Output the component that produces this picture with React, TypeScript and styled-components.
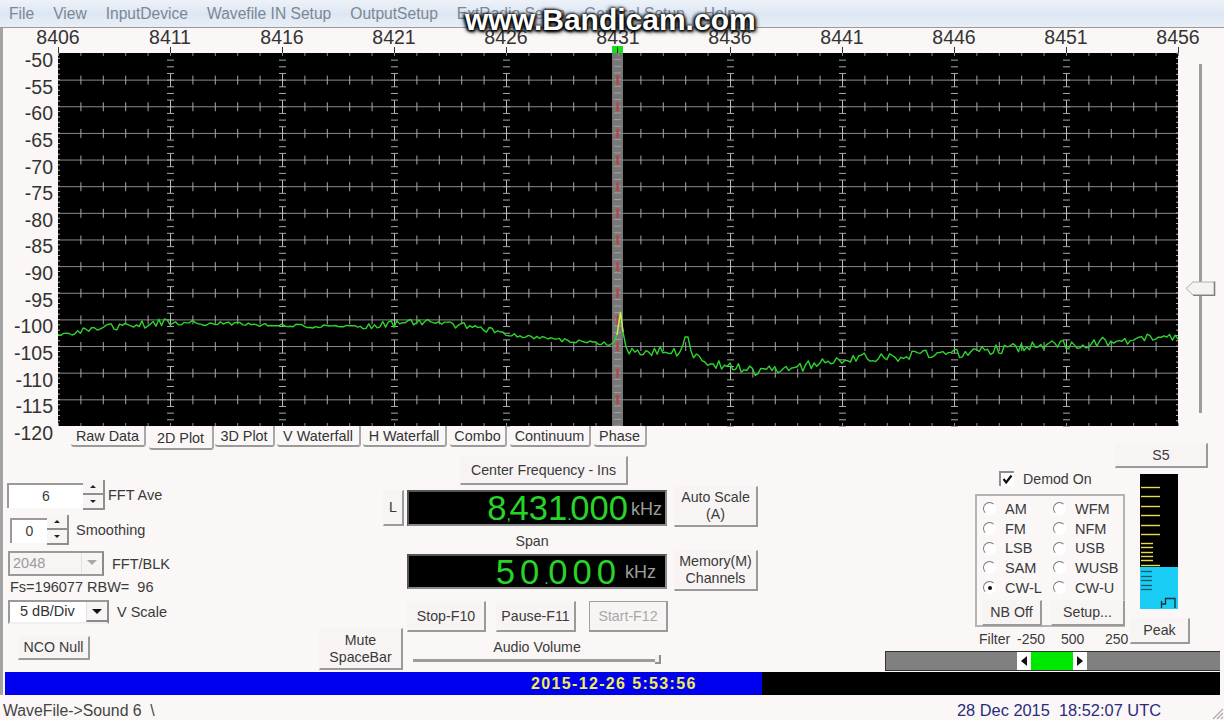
import React from "react";
import styled, { createGlobalStyle } from "styled-components";

const GlobalStyle = createGlobalStyle`
  html, body { margin: 0; padding: 0; background: #fbf7f7; }
  body { font-family: "Liberation Sans", Arial, sans-serif; color: #3a3a3a; }
`;

const Window = styled.div`
  position: relative;
  width: 1224px;
  height: 720px;
  overflow: hidden;
  display: flex;
  flex-direction: column;
  background: #fbf7f7;
`;

const MenuBar = styled.div`
  height: 27px;
  flex: none;
  display: flex;
  align-items: center;
  gap: 19px;
  padding-left: 9px;
  background: linear-gradient(#eef2f8, #dde7f4 50%, #e7eef7);
  border-bottom: 1px solid #9a9a9a;
  font-size: 15.6px;
  color: #7d8793;
`;

const Watermark = styled.div`
  position: absolute;
  left: 465px;
  top: 4px;
  font-size: 30px;
  line-height: 32px;
  font-weight: 700;
  color: #fff;
  text-shadow: 0 0 3px #000, 1px 1px 3px #000, -1px 1px 3px #000, 2px 2px 4px #222, -2px 0 4px #222;
  white-space: nowrap;
`;

const Client = styled.div`
  flex: none;
  width: 1217px;
  height: 667px;
  border-left: 3px solid #a3a3a3;
  display: flex;
  flex-direction: column;
`;

const Ruler = styled.div`
  height: 25px;
  flex: none;
  display: flex;
  margin-left: -1px;
`;

const RulerLabel = styled.div`
  flex: none;
  width: 112px;
  text-align: center;
  font-size: 19.5px;
  line-height: 19px;
  padding-top: 0;
  color: #333;
`;

const MainGrid = styled.div`
  flex: none;
  display: grid;
  grid-template-columns: 55px 1120px 1fr;
  grid-template-rows: 373px 24px;
`;

const Scale = styled.div`
  grid-row: 1 / span 2;
  grid-column: 1;
  display: flex;
  flex-direction: column;
  margin-top: -6px;
  height: 403px;
  padding-right: 5px;
`;

const ScaleLabel = styled.div`
  flex: none;
  height: 26.64px;
  line-height: 26px;
  text-align: right;
  font-size: 19.5px;
  color: #333;
`;

const PlotSvg = styled.svg`
  grid-row: 1;
  grid-column: 2;
  display: block;
  overflow: visible;
  background: #000;
`;

const SliderBox = styled.div`
  grid-row: 1;
  grid-column: 3;
  position: relative;
`;

const SliderTrack = styled.div`
  position: absolute;
  left: 21px;
  top: 11px;
  width: 3px;
  height: 349px;
  background: #9c9c9c;
`;

const SliderThumb = styled.svg`
  position: absolute;
  left: 7px;
  top: 228px;
`;

const Tabs = styled.div`
  grid-row: 2;
  grid-column: 2;
  display: flex;
  align-items: flex-start;
  padding-left: 13px;
`;

const Tab = styled.div<{ $w: number; $ml?: number; $active?: boolean }>`
  flex: none;
  box-sizing: border-box;
  width: ${(p) => p.$w}px;
  margin-left: ${(p) => p.$ml ?? 0}px;
  height: ${(p) => (p.$active ? 24 : 21)}px;
  padding-top: ${(p) => (p.$active ? 3 : 1)}px;
  text-align: center;
  font-size: 14.4px;
  line-height: 18px;
  color: #333;
  background: #fbf7f7;
  border-right: 2px solid #a8a8a8;
  border-bottom: 2px solid #9a9a9a;
  border-radius: 0 0 3px 3px;
`;

const Lower = styled.div`
  flex: none;
  height: 222px;
  display: flex;
`;

const LeftCol = styled.div`
  flex: none;
  width: 316px;
  padding-top: 30px;
  display: flex;
  flex-direction: column;
  align-items: flex-start;
`;

const ControlRow = styled.div<{ $mt: number; $ml: number }>`
  display: flex;
  align-items: center;
  margin-top: ${(p) => p.$mt}px;
  margin-left: ${(p) => p.$ml}px;
  font-size: 14.5px;
  color: #3a3a3a;
  white-space: pre;
`;

const Field = styled.div<{ $w: number; $h: number }>`
  box-sizing: border-box;
  width: ${(p) => p.$w}px;
  height: ${(p) => p.$h}px;
  background: #fff;
  border-top: 2px solid #9a9a9a;
  border-left: 2px solid #9a9a9a;
  text-align: center;
  line-height: ${(p) => p.$h - 3}px;
  font-size: 14px;
`;

const SpinPair = styled.div<{ $mr: number }>`
  display: flex;
  flex-direction: column;
  margin-right: ${(p) => p.$mr}px;
`;

const SpinButton = styled.div`
  box-sizing: border-box;
  width: 22px;
  height: 15px;
  display: flex;
  align-items: center;
  justify-content: center;
  background: #f8f4f4;
  border-right: 2px solid #8f8f8f;
  border-bottom: 2px solid #8f8f8f;
`;

const SpinArrow = styled.div<{ $up?: boolean }>`
  width: 0;
  height: 0;
  border-left: 3px solid transparent;
  border-right: 3px solid transparent;
  ${(p) => (p.$up ? "border-bottom: 3px solid #222;" : "border-top: 3px solid #222;")}
`;

const Combo = styled.div<{ $w: number; $h: number; $disabled?: boolean }>`
  box-sizing: border-box;
  width: ${(p) => p.$w}px;
  height: ${(p) => p.$h}px;
  display: flex;
  background: ${(p) => (p.$disabled ? "#f8f4f4" : "#fff")};
  border: 2px solid #9a9a9a;
  border-right-color: #8a8a8a;
  border-bottom-color: ${(p) => (p.$disabled ? "#9a9a9a" : "#f0f0f0")};
  color: ${(p) => (p.$disabled ? "#9a9a9a" : "#333")};
  line-height: ${(p) => p.$h - 5}px;
  margin-right: 8px;
`;

const ComboText = styled.div<{ $center?: boolean }>`
  flex: 1;
  padding-left: ${(p) => (p.$center ? 10 : 3)}px;
`;

const ComboArrow = styled.div<{ $disabled?: boolean }>`
  flex: none;
  width: 20px;
  display: flex;
  align-items: center;
  justify-content: center;
  background: #f8f4f4;
  border-left: 1px solid #e4e0e0;
  border-bottom: 2px solid ${(p) => (p.$disabled ? "transparent" : "#8a8a8a")};
  &::after {
    content: "";
    border-left: 5px solid transparent;
    border-right: 5px solid transparent;
    border-top: 5px solid ${(p) => (p.$disabled ? "#a8a8a8" : "#111")};
  }
`;

const Button = styled.div<{ $w: number; $h: number; $mt?: number; $ml?: number; $disabled?: boolean }>`
  flex: none;
  box-sizing: border-box;
  width: ${(p) => p.$w}px;
  height: ${(p) => p.$h}px;
  margin-top: ${(p) => p.$mt ?? 0}px;
  margin-left: ${(p) => p.$ml ?? 0}px;
  display: flex;
  align-items: center;
  justify-content: center;
  text-align: center;
  font-size: 14.2px;
  line-height: 17px;
  color: ${(p) => (p.$disabled ? "#a8a8a8" : "#3a3a3a")};
  background: #f8f4f4;
  border: 1px solid ${(p) => (p.$disabled ? "#a0a0a0" : "#f8f4f4")};
  border-right: 2px solid #9a9a9a;
  border-bottom: 2px solid #9a9a9a;
  white-space: pre-line;
`;

const MuteCol = styled.div`
  flex: none;
  width: 88px;
  display: flex;
  flex-direction: column;
  justify-content: space-between;
  padding: 40px 0 2px;
  box-sizing: border-box;
`;

const CenterCol = styled.div`
  flex: none;
  width: 267px;
  display: flex;
  flex-direction: column;
`;

const Display = styled.div<{ $mt: number; $h: number; $pr: number }>`
  box-sizing: border-box;
  width: 260px;
  height: ${(p) => p.$h}px;
  margin-top: ${(p) => p.$mt}px;
  background: #000;
  border: 2px solid #8a8a8a;
  border-top-color: #555;
  border-left-color: #555;
  display: flex;
  align-items: center;
  justify-content: flex-end;
  padding-right: ${(p) => p.$pr}px;
  white-space: nowrap;
`;

const Digits = styled.div<{ $spacing?: number; $mr: number }>`
  font-size: 34.6px;
  line-height: 34px;
  color: #28d428;
  letter-spacing: ${(p) => p.$spacing ?? 0}px;
  margin-right: ${(p) => p.$mr}px;
`;

const Sep = styled.span<{ $w: number }>`
  display: inline-block;
  width: ${(p) => p.$w}px;
  font-size: 16px;
  line-height: 16px;
  letter-spacing: 0;
`;

const Unit = styled.div`
  font-size: 18px;
  color: #9c9c9c;
  padding-top: 2px;
`;

const Caption = styled.div<{ $mt: number; $w: number }>`
  width: ${(p) => p.$w}px;
  margin-top: ${(p) => p.$mt}px;
  text-align: center;
  font-size: 14.2px;
  line-height: 16px;
  color: #3a3a3a;
`;

const TransportRow = styled.div`
  display: flex;
  margin-top: 12px;
`;

const VolumeTrack = styled.div`
  position: relative;
  width: 248px;
  height: 3px;
  margin: 4px 0 0 6px;
  background: #9c9c9c;
  &::after {
    content: "";
    position: absolute;
    right: 0;
    top: -4px;
    width: 4px;
    height: 7px;
    background: #f4f0f0;
    border-right: 2px solid #8f8f8f;
    border-bottom: 2px solid #8f8f8f;
  }
`;

const SideButtons = styled.div`
  flex: none;
  width: 84px;
  display: flex;
  flex-direction: column;
  padding-top: 36px;
`;

const RightBlock = styled.div`
  flex: none;
  width: 335px;
  margin-left: 127px;
  display: flex;
  flex-direction: column;
`;

const RightTop = styled.div`
  flex: none;
  height: 201px;
  display: flex;
  padding-left: 90px;
`;

const ModeCol = styled.div`
  flex: none;
  width: 150px;
  display: flex;
  flex-direction: column;
`;

const DemodRow = styled.div`
  display: flex;
  align-items: center;
  gap: 9px;
  height: 15px;
  margin: 21px 0 0 24px;
  font-size: 14.2px;
`;

const CheckBox = styled.svg`
  flex: none;
  background: #fff;
  border-top: 2px solid #8f8f8f;
  border-left: 2px solid #8f8f8f;
`;

const ModeBox = styled.div`
  box-sizing: border-box;
  height: 133px;
  margin-top: 8px;
  border: 2px solid #b4b4b4;
  padding: 3px 0 0 6px;
  display: flex;
  flex-direction: column;
`;

const RadioGrid = styled.div`
  display: grid;
  grid-template-columns: 70px 70px;
  grid-auto-rows: 19.7px;
`;

const RadioItem = styled.div`
  display: flex;
  align-items: center;
  gap: 9px;
  font-size: 14.5px;
  color: #3a3a3a;
  white-space: nowrap;
`;

const Radio = styled.div<{ $on?: boolean }>`
  flex: none;
  box-sizing: border-box;
  width: 13px;
  height: 13px;
  border-radius: 50%;
  background: #fff;
  border: 1.5px solid #fff;
  border-top-color: #777;
  border-left-color: #777;
  display: flex;
  align-items: center;
  justify-content: center;
  &::after {
    content: "";
    display: ${(p) => (p.$on ? "block" : "none")};
    width: 4px;
    height: 4px;
    border-radius: 50%;
    background: #111;
  }
`;

const ModeButtons = styled.div`
  display: flex;
  margin-top: 3px;
`;

const FilterLabels = styled.div`
  display: flex;
  margin: 4px 0 0 4px;
  font-size: 14px;
  line-height: 16px;
  width: 160px;
  white-space: pre;
`;

const FilterLabel = styled.div<{ $w: number }>`
  flex: none;
  width: ${(p) => p.$w}px;
`;

const MeterCol = styled.div`
  flex: none;
  margin-left: -10px;
  display: flex;
  flex-direction: column;
`;

const MeterSvg = styled.svg`
  display: block;
  margin: 6px 0 0 25px;
  background: #000;
`;

const FilterBar = styled.div`
  box-sizing: border-box;
  height: 20px;
  background: #808080;
  border: 1px solid #333;
  border-right: none;
  display: flex;
  padding-left: 131px;
`;

const FilterGrip = styled.div<{ $left?: boolean }>`
  flex: none;
  width: 14px;
  background: #fff;
  display: flex;
  align-items: center;
  justify-content: center;
  &::after {
    content: "";
    border-top: 5px solid transparent;
    border-bottom: 5px solid transparent;
    ${(p) => (p.$left ? "border-right: 6px solid #111;" : "border-left: 6px solid #111;")}
  }
`;

const FilterPass = styled.div`
  flex: none;
  width: 42px;
  background: #00e800;
`;

const ProgressBar = styled.div`
  flex: none;
  height: 23px;
  margin-left: 2px;
  display: flex;
  background: #000;
`;

const ProgressFill = styled.div`
  flex: none;
  box-sizing: border-box;
  width: 757px;
  background: #0000f0;
  padding-left: 526px;
  font-size: 16px;
  font-weight: 700;
  line-height: 24px;
  letter-spacing: 1.35px;
  color: #f2ee50;
  white-space: nowrap;
`;

const StatusBar = styled.div`
  flex: none;
  height: 25px;
  display: flex;
  justify-content: space-between;
  align-items: center;
  padding: 6px 63px 0 3px;
  box-sizing: border-box;
  font-size: 15.8px;
  white-space: pre;
`;

const StatusLeft = styled.div`
  color: #444;
`;

const StatusRight = styled.div`
  color: #2b2b7e;
  font-size: 16.4px;
`;

const Grip = styled.svg`
  position: absolute;
  right: 0;
  bottom: 0;
`;

const freqs = [8406, 8411, 8416, 8421, 8426, 8431, 8436, 8441, 8446, 8451, 8456];
const dbs = Array.from({ length: 15 }, (_, i) => -50 - i * 5);
const menus = ["File", "View", "InputDevice", "Wavefile IN Setup", "OutputSetup", "ExtRadio Setup", "General Setup", "Help"];

const PW = 1120;
const PH = 373;
const LINE = 26.64;

const anchors: [number, number][] = [
  [58, 333], [110, 328], [170, 322], [300, 326], [350, 327], [420, 322], [480, 327], [510, 335],
  [560, 340], [612, 344], [626, 350], [680, 352], [710, 364], [760, 372], [800, 367], [860, 358],
  [950, 354], [1030, 346], [1100, 342], [1178, 337],
];

function baseAt(x: number): number {
  for (let i = 1; i < anchors.length; i++) {
    if (x <= anchors[i][0]) {
      const [x0, y0] = anchors[i - 1];
      const [x1, y1] = anchors[i];
      return y0 + ((y1 - y0) * (x - x0)) / (x1 - x0);
    }
  }
  return 337;
}

function ampAt(x: number): number {
  if (x < 170) return 4;
  if (x < 210) return 3;
  if (x < 360) return 1.8;
  if (x < 500) return 3.4;
  if (x < 612) return 1.8;
  return 5;
}

function makeTrace(): string {
  let seed = 987654;
  const rnd = () => {
    seed = (seed * 16807) % 2147483647;
    return seed / 2147483647;
  };
  const pts: string[] = [];
  for (let x = 58; x <= 1178; x += 2.8) {
    const y = baseAt(x) + (rnd() - 0.5) * 2 * ampAt(x);
    if (x >= 612 && x <= 628) continue;
    if (x >= 681 && x <= 692) continue;
    pts.push(`${(x - 58).toFixed(1)},${(y - 53).toFixed(1)}`);
    if (x + 2.8 > 612 && x < 612) {
      pts.push(`${614 - 58},${342 - 53}`, `${617 - 58},${335 - 53}`, `${620.5 - 58},${312 - 53}`, `${623 - 58},${332 - 53}`, `${626 - 58},${347 - 53}`);
    }
    if (x + 2.8 > 681 && x < 681) {
      pts.push(`${683 - 58},${345 - 53}`, `${685 - 58},${337 - 53}`, `${688 - 58},${337 - 53}`, `${691 - 58},${351 - 53}`);
    }
  }
  return pts.join(" ");
}

const tracePoints = makeTrace();

function Plot() {
  const lines = Array.from({ length: 13 }, (_, i) => LINE * (i + 1));
  const minor = Array.from({ length: 51 }, (_, i) => i * 22.4);
  const major = Array.from({ length: 11 }, (_, i) => i * 112);
  const dashes = Array.from({ length: 56 }, (_, i) => i * (LINE / 4) + 6.66).filter((y) => y < PH);
  const edge = Array.from({ length: 70 }, (_, i) => i * 5.33);
  return (
    <PlotSvg width={PW} height={PH} viewBox={`0 0 ${PW} ${PH}`}>
      <rect x={554} y={0} width={11} height={PH} fill="#777" />
      {dashes.map((y) => (
        <line key={`c${y}`} x1={556} x2={563} y1={y} y2={y} stroke="#a2a2a2" />
      ))}
      {lines.map((y) => (
        <line key={`h${y}`} x1={0} x2={PW} y1={y + 0.5} y2={y + 0.5} stroke="#8a8a8a" />
      ))}
      {lines.map((y) =>
        minor.map((x, i) =>
          i % 5 === 0 ? null : (
            <line key={`t${i}-${y}`} x1={x + 0.5} x2={x + 0.5} y1={y - 4} y2={y + 5} stroke="#a8a8a8" />
          ),
        ),
      )}
      {minor.map((x, i) => (
        <line key={`e${i}`} x1={x + 0.5} x2={x + 0.5} y1={0} y2={3} stroke="#8a8a8a" />
      ))}
      {minor.map((x, i) => (
        <line key={`b${i}`} x1={x + 0.5} x2={x + 0.5} y1={PH - 3} y2={PH} stroke="#8a8a8a" />
      ))}
      {major.slice(1, 10).map((x) =>
        x === 560 ? null : (
          <g key={`m${x}`}>
            {dashes.map((y) => (
              <line key={y} x1={x - 3} x2={x + 4} y1={y + 0.5} y2={y + 0.5} stroke="#a8a8a8" />
            ))}
            {lines.map((y) => (
              <line key={y} x1={x + 0.5} x2={x + 0.5} y1={y - 6} y2={y + 7} stroke="#b8b8b8" />
            ))}
          </g>
        ),
      )}
      {edge.map((y) => (
        <g key={`s${y}`}>
          <line x1={0} x2={2} y1={y} y2={y} stroke="#b0b0b0" />
          <line x1={PW - 2} x2={PW} y1={y} y2={y} stroke="#b0b0b0" />
        </g>
      ))}
      {lines.map((y) => (
        <line key={`r${y}`} x1={559.5} x2={559.5} y1={y - 4} y2={y + 5} stroke="#c83a3a" strokeWidth={2} />
      ))}
      {major.map((x) => (
        <line key={`k${x}`} x1={x + 0.5} x2={x + 0.5} y1={-6} y2={0} stroke="#333" />
      ))}
      <rect x={554} y={-7} width={11} height={7} fill="#18e018" />
      <line x1={559.5} x2={559.5} y1={-6} y2={0} stroke="#333" />
      <polyline points={tracePoints} fill="none" stroke="#2ed42e" strokeWidth={1.4} strokeLinejoin="round" />
      <polyline points="559,282 562.5,259 565,279" fill="none" stroke="#d8e85a" strokeWidth={1.4} />
    </PlotSvg>
  );
}

function Meter() {
  const yellowLong = [13, 22, 32, 41, 51, 60, 91];
  const yellowShort = [69, 73, 78, 82, 86];
  const darkShort = [97, 102, 106, 111, 115];
  return (
    <MeterSvg width={38} height={135} viewBox="0 0 38 135">
      <rect x={0} y={93} width={38} height={42} fill="#19cdf5" />
      {yellowLong.map((y) => (
        <line key={y} x1={1} x2={20} y1={y + 0.5} y2={y + 0.5} stroke="#e6de48" strokeWidth={1.4} />
      ))}
      {yellowShort.map((y) => (
        <line key={y} x1={1} x2={13} y1={y + 0.5} y2={y + 0.5} stroke="#e6de48" strokeWidth={1.4} />
      ))}
      {darkShort.map((y) => (
        <line key={y} x1={1} x2={12} y1={y + 0.5} y2={y + 0.5} stroke="#0a5a6a" strokeWidth={1.3} />
      ))}
      <path d="M21.5 134V127M21.5 130H25.5V124.5H35V134" fill="none" stroke="#133" strokeWidth={1.3} />
    </MeterSvg>
  );
}

const leftModes = ["AM", "FM", "LSB", "SAM", "CW-L"];
const rightModes = ["WFM", "NFM", "USB", "WUSB", "CW-U"];

export default function App() {
  return (
    <Window>
      <GlobalStyle />
      <MenuBar>
        {menus.map((m) => (
          <div key={m}>{m}</div>
        ))}
      </MenuBar>
      <Client>
        <Ruler>
          {freqs.map((f) => (
            <RulerLabel key={f}>{f}</RulerLabel>
          ))}
        </Ruler>
        <MainGrid>
          <Scale>
            {dbs.map((d) => (
              <ScaleLabel key={d}>{d}</ScaleLabel>
            ))}
          </Scale>
          <Plot />
          <SliderBox>
            <SliderTrack />
            <SliderThumb width={31} height={15} viewBox="0 0 31 15">
              <path d="M1 7.5 L8 1 H29.5 V14 H8 Z" fill="#f6f2f2" stroke="#b0b0b0" />
              <path d="M29.5 0.5 V14.5 H8" fill="none" stroke="#808080" strokeWidth={1.6} />
            </SliderThumb>
          </SliderBox>
          <Tabs>
            <Tab $w={75}>Raw Data</Tab>
            <Tab $w={65} $ml={3} $active>2D Plot</Tab>
            <Tab $w={60} $ml={1}>3D Plot</Tab>
            <Tab $w={84} $ml={2}>V Waterfall</Tab>
            <Tab $w={84} $ml={2}>H Waterfall</Tab>
            <Tab $w={57} $ml={3}>Combo</Tab>
            <Tab $w={81} $ml={3}>Continuum</Tab>
            <Tab $w={53} $ml={3}>Phase</Tab>
          </Tabs>
        </MainGrid>
        <Lower>
          <LeftCol>
            <ControlRow $mt={0} $ml={4}>
              <Field $w={76} $h={25}>6</Field>
              <SpinPair $mr={3}>
                <SpinButton><SpinArrow $up /></SpinButton>
                <SpinButton><SpinArrow /></SpinButton>
              </SpinPair>
              FFT Ave
            </ControlRow>
            <ControlRow $mt={5} $ml={7}>
              <Field $w={37} $h={25}>0</Field>
              <SpinPair $mr={7}>
                <SpinButton><SpinArrow $up /></SpinButton>
                <SpinButton><SpinArrow /></SpinButton>
              </SpinPair>
              Smoothing
            </ControlRow>
            <ControlRow $mt={6} $ml={5}>
              <Combo $w={96} $h={25} $disabled>
                <ComboText>2048</ComboText>
                <ComboArrow $disabled />
              </Combo>
              FFT/BLK
            </ControlRow>
            <ControlRow $mt={3} $ml={7}>Fs=196077 RBW=  96</ControlRow>
            <ControlRow $mt={5} $ml={5}>
              <Combo $w={101} $h={24}>
                <ComboText $center>5 dB/Div</ComboText>
                <ComboArrow />
              </Combo>
              V Scale
            </ControlRow>
            <Button $w={72} $h={24} $mt={12} $ml={15}>NCO Null</Button>
          </LeftCol>
          <MuteCol>
            <Button $w={21} $h={36} $ml={64}>L</Button>
            <Button $w={84} $h={42}>{"Mute\nSpaceBar"}</Button>
          </MuteCol>
          <CenterCol>
            <Button $w={168} $h={29} $mt={6} $ml={53}>Center Frequency - Ins</Button>
            <Display $mt={5} $h={36} $pr={3}>
              <Digits $mr={3}>
                8<Sep $w={3}>,</Sep>431<Sep $w={3}>.</Sep>000
              </Digits>
              <Unit>kHz</Unit>
            </Display>
            <Caption $mt={7} $w={250}>Span</Caption>
            <Display $mt={5} $h={35} $pr={9}>
              <Digits $spacing={5} $mr={4}>
                50<Sep $w={4}>.</Sep>000
              </Digits>
              <Unit>kHz</Unit>
            </Display>
            <TransportRow>
              <Button $w={79} $h={31}>Stop-F10</Button>
              <Button $w={80} $h={31} $ml={10}>Pause-F11</Button>
              <Button $w={79} $h={31} $ml={13} $disabled>Start-F12</Button>
            </TransportRow>
            <Caption $mt={7} $w={260}>Audio Volume</Caption>
            <VolumeTrack />
          </CenterCol>
          <SideButtons>
            <Button $w={84} $h={41}>{"Auto Scale\n(A)"}</Button>
            <Button $w={84} $h={41} $mt={23}>{"Memory(M)\nChannels"}</Button>
          </SideButtons>
          <RightBlock>
            <RightTop>
              <ModeCol>
                <DemodRow>
                  <CheckBox width={13} height={13} viewBox="0 0 13 13">
                    <path d="M2.5 6 L5.2 9.5 L10.5 2.5" fill="none" stroke="#111" strokeWidth={2.2} />
                  </CheckBox>
                  Demod On
                </DemodRow>
                <ModeBox>
                  <RadioGrid>
                    {leftModes.map((m, i) => (
                      <React.Fragment key={m}>
                        <RadioItem>
                          <Radio $on={m === "CW-L"} />
                          {m}
                        </RadioItem>
                        <RadioItem>
                          <Radio />
                          {rightModes[i]}
                        </RadioItem>
                      </React.Fragment>
                    ))}
                  </RadioGrid>
                  <ModeButtons>
                    <Button $w={60} $h={26} $ml={-1}>NB Off</Button>
                    <Button $w={74} $h={26} $ml={9}>Setup...</Button>
                  </ModeButtons>
                </ModeBox>
                <FilterLabels>
                  <FilterLabel $w={38}>Filter</FilterLabel>
                  <FilterLabel $w={44}>-250</FilterLabel>
                  <FilterLabel $w={44}>500</FilterLabel>
                  <FilterLabel $w={30}>250</FilterLabel>
                </FilterLabels>
              </ModeCol>
              <MeterCol>
                <Button $w={93} $h={25} $mt={-7}>S5</Button>
                <Meter />
                <Button $w={60} $h={26} $mt={9} $ml={15}>Peak</Button>
              </MeterCol>
            </RightTop>
            <FilterBar>
              <FilterGrip $left />
              <FilterPass />
              <FilterGrip />
            </FilterBar>
          </RightBlock>
        </Lower>
        <ProgressBar>
          <ProgressFill>2015-12-26 5:53:56</ProgressFill>
        </ProgressBar>
      </Client>
      <StatusBar>
        <StatusLeft>WaveFile-&gt;Sound 6  \</StatusLeft>
        <StatusRight>28 Dec 2015  18:52:07 UTC</StatusRight>
      </StatusBar>
      <Grip width={14} height={14} viewBox="0 0 14 14">
        <path d="M13 3 L3 13 M13 7 L7 13 M13 11 L11 13" stroke="#aaa" strokeWidth={1.2} />
      </Grip>
      <Watermark>www.Bandicam.com</Watermark>
    </Window>
  );
}
